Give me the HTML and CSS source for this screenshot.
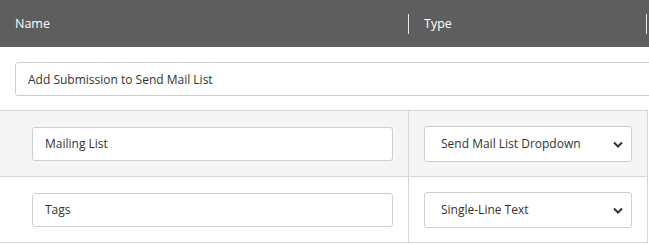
FILE: index.html
```html
<!doctype html>
<html lang="en">
<head>
    <meta charset="UTF-8">
    <title>Fields</title>
    <link rel="stylesheet" href="styles.css">
</head>
<body>

<div class="head">
    <div class="head-cell head-name">Name</div>
    <div class="head-cell head-type">Type</div>
</div>

<div class="title-row">
    <input class="field title-field" type="text" value="Add Submission to Send Mail List">
</div>

<div class="rows">
    <div class="row row-grey">
        <div class="cell cell-name">
            <input class="field" type="text" value="Mailing List">
        </div>
        <div class="cell cell-type">
            <div class="select-wrap">
                <select class="field select">
                    <option>Send Mail List Dropdown</option>
                </select>
                <svg class="chevron" width="10" height="7" viewBox="0 0 10 7">
                    <path d="M1 1.5 L5 5.5 L9 1.5" fill="none" stroke="#333" stroke-width="2"/>
                </svg>
            </div>
        </div>
    </div>
    <div class="row">
        <div class="cell cell-name">
            <input class="field" type="text" value="Tags">
        </div>
        <div class="cell cell-type">
            <div class="select-wrap">
                <select class="field select">
                    <option>Single-Line Text</option>
                </select>
                <svg class="chevron" width="10" height="7" viewBox="0 0 10 7">
                    <path d="M1 1.5 L5 5.5 L9 1.5" fill="none" stroke="#333" stroke-width="2"/>
                </svg>
            </div>
        </div>
    </div>
</div>

</body>
</html>
```

FILE: styles.css
```css
*{
    margin: 0;
    padding: 0;
    box-sizing: border-box;
    font-family: 'Open Sans', sans-serif;
}

body{
    background: #fff;
    width: 649px;
    overflow: hidden;
}

.head{
    display: flex;
    height: 47px;
    background: #5e5e5e;
    color: #fff;
    font-size: 12.5px;
    align-items: center;
}
.head-cell{
    height: 20px;
    line-height: 20px;
}
.head-name{
    width: 408px;
    padding-left: 15px;
}
.head-type{
    width: 239px;
    padding-left: 15px;
    border-left: 1px solid #e6e6e6;
    border-right: 1px solid #e6e6e6;
}

.title-row{
    padding: 15px 0 14px 15px;
}

.field{
    display: block;
    height: 34px;
    padding: 0 12px;
    border: 1px solid #cfcfcf;
    border-radius: 3px;
    background: #fff;
    color: #333;
    font-size: 12px;
    outline: none;
}
.title-field{
    width: 660px;
}

.rows{
    width: 648px;
    border-top: 1px solid #d6d6d6;
    border-right: 1px solid #d6d6d6;
}
.row{
    display: flex;
    border-bottom: 1px solid #d6d6d6;
}
.row-grey{
    background: #f5f5f5;
}
.cell{
    display: flex;
    align-items: center;
    height: 65px;
}
.cell-name{
    width: 409px;
    padding: 0 15px 0 32px;
    border-right: 1px solid #d6d6d6;
}
.cell-name .field{
    width: 100%;
}
.cell-type{
    flex: 1;
    padding: 0 15px 0 15px;
}

.select-wrap{
    position: relative;
    width: 100%;
}
.select{
    width: 100%;
    height: 36px;
    padding: 0 16px;
    appearance: none;
    -webkit-appearance: none;
}
.chevron{
    position: absolute;
    right: 9px;
    top: 15px;
    pointer-events: none;
}
```
